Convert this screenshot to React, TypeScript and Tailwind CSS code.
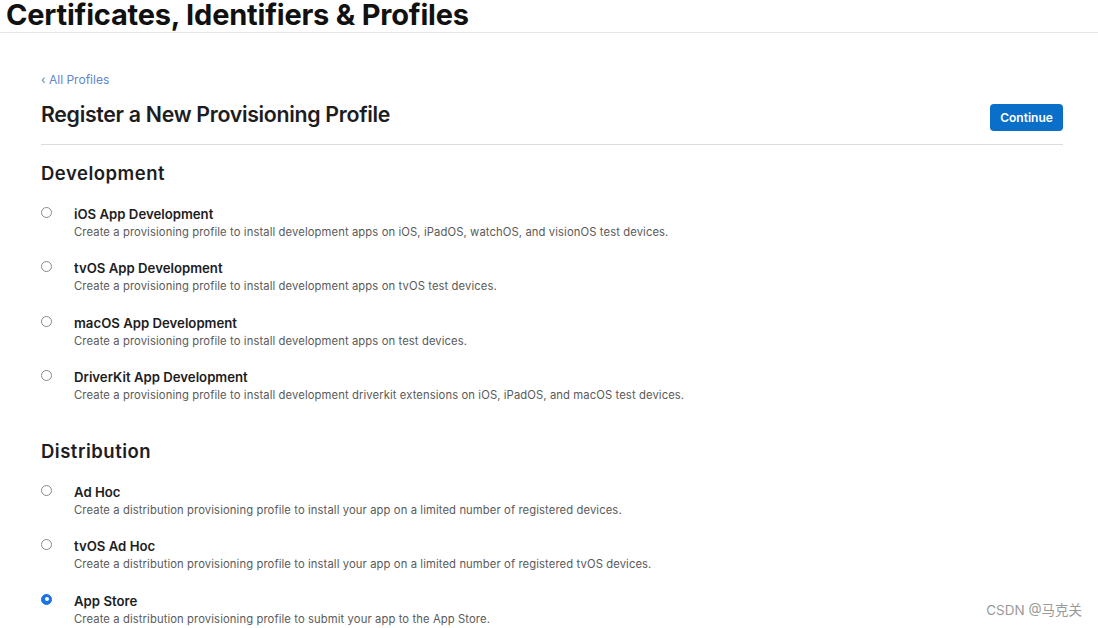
import React, { useState } from 'react';

const dev = [
  { id: 'ios', title: 'iOS App Development', desc: 'Create a provisioning profile to install development apps on iOS, iPadOS, watchOS, and visionOS test devices.' },
  { id: 'tvos', title: 'tvOS App Development', desc: 'Create a provisioning profile to install development apps on tvOS test devices.' },
  { id: 'macos', title: 'macOS App Development', desc: 'Create a provisioning profile to install development apps on test devices.' },
  { id: 'driverkit', title: 'DriverKit App Development', desc: 'Create a provisioning profile to install development driverkit extensions on iOS, iPadOS, and macOS test devices.' },
];

const dist = [
  { id: 'adhoc', title: 'Ad Hoc', desc: 'Create a distribution provisioning profile to install your app on a limited number of registered devices.' },
  { id: 'tvadhoc', title: 'tvOS Ad Hoc', desc: 'Create a distribution provisioning profile to install your app on a limited number of registered tvOS devices.' },
  { id: 'appstore', title: 'App Store', desc: 'Create a distribution provisioning profile to submit your app to the App Store.' },
];

type Item = { id: string; title: string; desc: string };

function Option({ item, checked, onPick }: { item: Item; checked: boolean; onPick: () => void }) {
  return (
    <label className="flex items-start h-[54.3px] cursor-pointer" onClick={onPick}>
      <span className="w-[33px] pt-[1px]">
        {checked ? (
          <span className="block w-[11px] h-[11px] rounded-full bg-[#1a73e8] border border-[#1a73e8] relative">
            <span className="absolute left-[2.5px] top-[2.5px] w-[4px] h-[4px] rounded-full bg-white" />
          </span>
        ) : (
          <span className="block w-[11px] h-[11px] rounded-full border border-[#8a8a8a] bg-white" />
        )}
      </span>
      <span className="flex flex-col">
        <span className="text-[13.2px] leading-[16px] font-semibold text-[#1d1d1f]">{item.title}</span>
        <span className="text-[11.25px] leading-[20px] text-[#5a5a5a] tracking-[0.1px]">{item.desc}</span>
      </span>
    </label>
  );
}

export default function App() {
  const [picked, setPicked] = useState('appstore');

  return (
    <div className="w-[1098px] h-[628px] bg-white overflow-hidden relative" style={{ fontFamily: 'Inter, "Noto Sans", "Noto Sans CJK SC", sans-serif' }}>
      <div className="pl-[6px] h-[33px] border-b border-[#e5e5e5]">
        <h1 className="text-[29px] leading-[30px] font-bold text-[#111] tracking-[-0.2px]">Certificates, Identifiers &amp; Profiles</h1>
      </div>

      <div className="pl-[41px] pr-[35px] pt-[40px]">
        <a className="text-[12px] leading-[14px] text-[#5f86cf] block">‹ All Profiles</a>
        <div className="flex items-start justify-between mt-[14px] pb-[13px] border-b border-[#dcdcdc]">
          <h2 className="text-[21.3px] leading-[26px] font-semibold text-[#1d1d1f] tracking-[-0.3px]">Register a New Provisioning Profile</h2>
          <button className="bg-[#0a6fc9] text-white text-[12px] font-semibold rounded-[4px] w-[73px] h-[27px] mt-[3px]">Continue</button>
        </div>

        <h3 className="text-[18.5px] leading-[22px] font-semibold text-[#1d1d1f] mt-[17px] tracking-[0.5px]">Development</h3>
        <div className="mt-[22px]">
          {dev.map(i => (
            <Option key={i.id} item={i} checked={picked === i.id} onPick={() => setPicked(i.id)} />
          ))}
        </div>

        <h3 className="text-[18.5px] leading-[22px] font-semibold text-[#1d1d1f] mt-[17px] tracking-[0.5px]">Distribution</h3>
        <div className="mt-[22px]">
          {dist.map(i => (
            <Option key={i.id} item={i} checked={picked === i.id} onPick={() => setPicked(i.id)} />
          ))}
        </div>
      </div>

      <div className="absolute right-[16px] bottom-[8px] text-[13.5px] text-[#9a9a9a]">CSDN @马克关</div>
    </div>
  );
}
